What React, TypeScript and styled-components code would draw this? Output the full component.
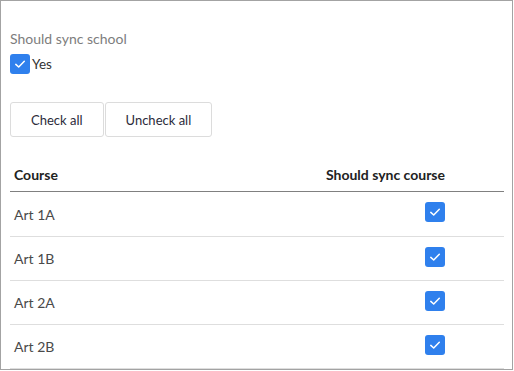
import React, { useState } from "react";
import styled, { createGlobalStyle } from "styled-components";

const GlobalStyle = createGlobalStyle`
  html, body {
    margin: 0;
    padding: 0;
    background: #ffffff;
  }
  body {
    font-family: Lato, "Open Sans", sans-serif;
  }
`;

const Frame = styled.div`
  box-sizing: border-box;
  width: 513px;
  height: 370px;
  border: 1px solid #a3a3a3;
  padding: 29px 7px 0 9px;
  overflow: hidden;
  background: #fff;
`;

const FieldLabel = styled.div`
  font-size: 14px;
  line-height: 17px;
  color: #7d7d7d;
`;

const CheckRow = styled.label`
  display: flex;
  align-items: center;
  gap: 2px;
  margin-top: 7px;
  font-size: 13.5px;
  color: #333;
`;

const Box = styled.span<{ $checked: boolean }>`
  display: inline-flex;
  align-items: center;
  justify-content: center;
  width: 20px;
  height: 20px;
  border-radius: 3px;
  background: ${(p) => (p.$checked ? "#2f80ed" : "#fff")};
  border: ${(p) => (p.$checked ? "none" : "1px solid #bbb")};
  box-sizing: border-box;
  cursor: pointer;
  flex: none;
`;

const ButtonBar = styled.div`
  display: flex;
  gap: 1px;
  margin-top: 28px;
`;

const Button = styled.button`
  height: 35px;
  padding: 0 20px;
  background: #fff;
  border: 1px solid #dcdcdc;
  border-radius: 3px;
  font-family: Lato, "Open Sans", sans-serif;
  font-size: 13px;
  color: #2b2b3a;
  cursor: pointer;
`;

const Table = styled.table`
  width: 494px;
  margin-top: 21px;
  border-collapse: collapse;
  font-size: 14px;

  tbody tr:first-child td {
    height: 44px;
  }
`;

const HeadCell = styled.th<{ $right?: boolean }>`
  height: 33px;
  padding: 0 ${(p) => (p.$right ? "59px" : "4px")} 0 4px;
  text-align: ${(p) => (p.$right ? "right" : "left")};
  font-weight: 700;
  color: #222;
  border-bottom: 1px solid #808080;
`;

const Row = styled.tr`
  border-bottom: 1px solid #dedede;
`;

const Cell = styled.td<{ $right?: boolean }>`
  height: 43px;
  padding: 0 ${(p) => (p.$right ? "59px" : "4px")} 0 4px;
  text-align: ${(p) => (p.$right ? "right" : "left")};
  color: #4a4a4a;
  vertical-align: middle;
  & > span {
    vertical-align: middle;
    margin-bottom: 4px;
  }
`;

const Tick = () => (
  <svg width="14" height="14" viewBox="0 0 14 14" fill="none">
    <path
      d="M2.8 7.4 L5.7 10 L11.3 4.2"
      stroke="#fff"
      strokeWidth="1.5"
      strokeLinecap="round"
      strokeLinejoin="round"
    />
  </svg>
);

const Checkbox = ({ checked, onToggle }: { checked: boolean; onToggle: () => void }) => (
  <Box $checked={checked} onClick={onToggle} role="checkbox" aria-checked={checked}>
    {checked && <Tick />}
  </Box>
);

const COURSES = ["Art 1A", "Art 1B", "Art 2A", "Art 2B"];

const App = () => {
  const [school, setSchool] = useState(true);
  const [synced, setSynced] = useState<boolean[]>(COURSES.map(() => true));

  const toggle = (i: number) =>
    setSynced((s) => s.map((v, j) => (j === i ? !v : v)));

  return (
    <>
      <GlobalStyle />
      <Frame>
        <FieldLabel>Should sync school</FieldLabel>
        <CheckRow>
          <Checkbox checked={school} onToggle={() => setSchool(!school)} />
          Yes
        </CheckRow>
        <ButtonBar>
          <Button onClick={() => setSynced(COURSES.map(() => true))}>Check all</Button>
          <Button onClick={() => setSynced(COURSES.map(() => false))}>Uncheck all</Button>
        </ButtonBar>
        <Table>
          <thead>
            <tr>
              <HeadCell>Course</HeadCell>
              <HeadCell $right>Should sync course</HeadCell>
            </tr>
          </thead>
          <tbody>
            {COURSES.map((c, i) => (
              <Row key={c}>
                <Cell>{c}</Cell>
                <Cell $right>
                  <Checkbox checked={synced[i]} onToggle={() => toggle(i)} />
                </Cell>
              </Row>
            ))}
          </tbody>
        </Table>
      </Frame>
    </>
  );
};

export default App;
